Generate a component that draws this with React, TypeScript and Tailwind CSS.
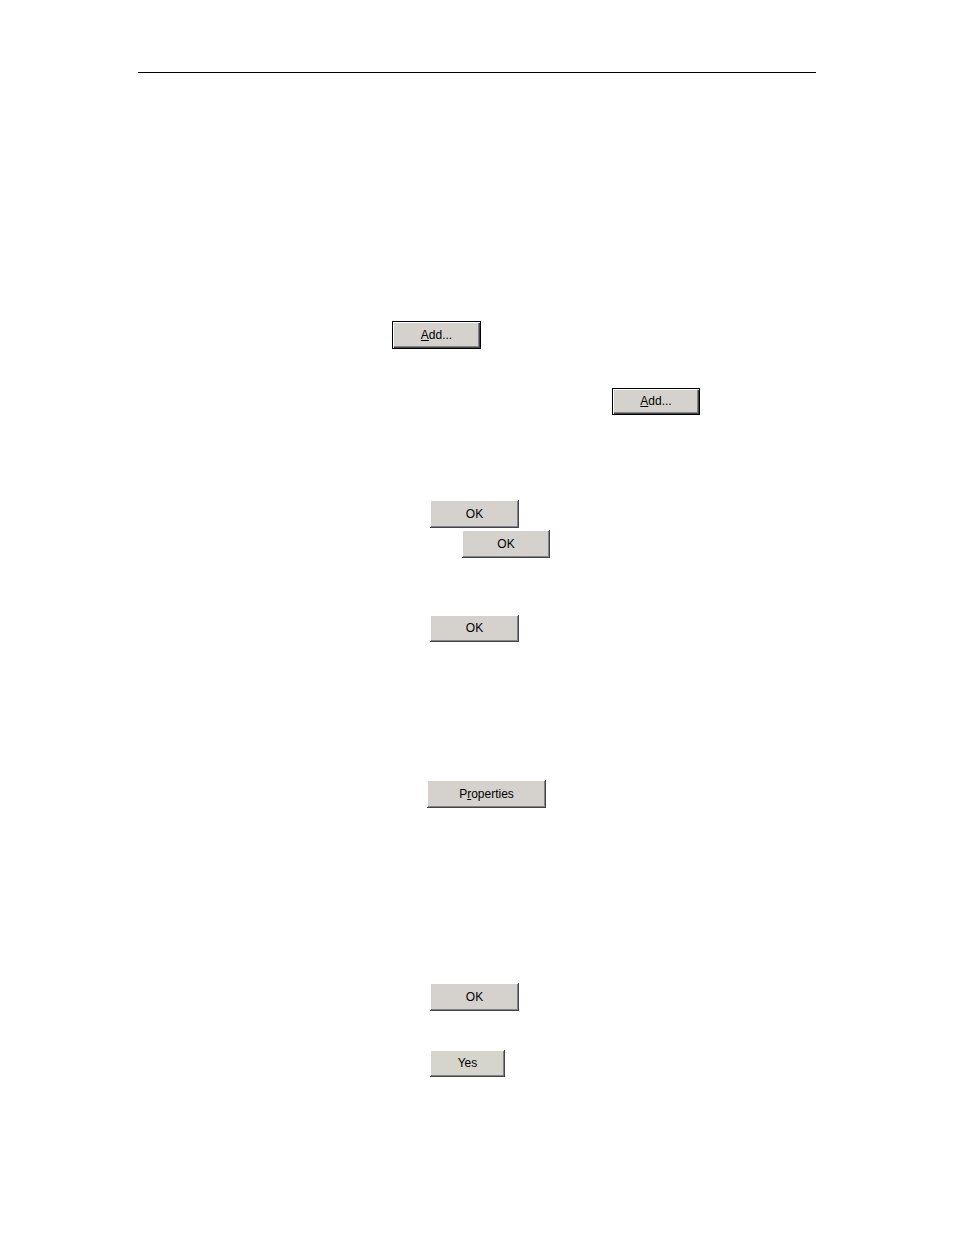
import clsx from 'clsx';
import type { ReactNode } from 'react';

type DialogButtonProps = {
  className: string;
  isDefault?: boolean;
  children: ReactNode;
};

function DialogButton({ className, isDefault, children }: DialogButtonProps) {
  return (
    <button
      type="button"
      className={clsx(
        'flex items-center justify-center pb-px text-xs leading-4 text-black',
        isDefault
          ? 'border border-black shadow-[inset_1px_1px_#fff,inset_-1px_-1px_#45444a,inset_-2px_-2px_#85838a]'
          : 'shadow-[inset_-1px_-1px_#45444a,inset_1px_1px_#fff,inset_-2px_-2px_#85838a]',
        className
      )}
    >
      {children}
    </button>
  );
}

export default function App() {
  return (
    <main className="min-h-screen bg-white px-[138px] pt-[72px] font-['Liberation_Sans',Arial,sans-serif]">
      <hr className="border-t border-black" />

      {/* Add users and groups */}
      <section className="flex flex-col items-start pt-[248px]">
        <DialogButton isDefault className="ml-[254px] h-7 w-[89px] bg-[#d5d2cd]">
          <span><u>A</u>dd...</span>
        </DialogButton>
        <DialogButton isDefault className="mt-[39px] ml-[474px] h-[27px] w-[88px] bg-[#d5d2cd]">
          <span><u>A</u>dd...</span>
        </DialogButton>
      </section>

      {/* Confirm the selection */}
      <section className="flex flex-col items-start pt-[85px]">
        <DialogButton className="ml-[292px] h-7 w-[89px] bg-[#d5d2cd]">OK</DialogButton>
        <DialogButton className="mt-[2px] ml-[324px] h-7 w-[88px] bg-[#d5d2cd]">OK</DialogButton>
        <DialogButton className="mt-[57px] ml-[292px] h-[27px] w-[89px] bg-[#d5d2cd]">OK</DialogButton>
      </section>

      {/* Properties */}
      <section className="flex flex-col items-start pt-[138px]">
        <DialogButton className="ml-[289px] h-7 w-[119px] bg-[#d5d2cd]">
          <span>P<u>r</u>operties</span>
        </DialogButton>
      </section>

      {/* Save and restart */}
      <section className="flex flex-col items-start pt-[175px]">
        <DialogButton className="ml-[292px] h-7 w-[89px] bg-[#d5d2cd]">OK</DialogButton>
        <DialogButton className="mt-[39px] ml-[292px] h-[27px] w-[75px] bg-[#d5d5cc]">Yes</DialogButton>
      </section>
    </main>
  );
}
